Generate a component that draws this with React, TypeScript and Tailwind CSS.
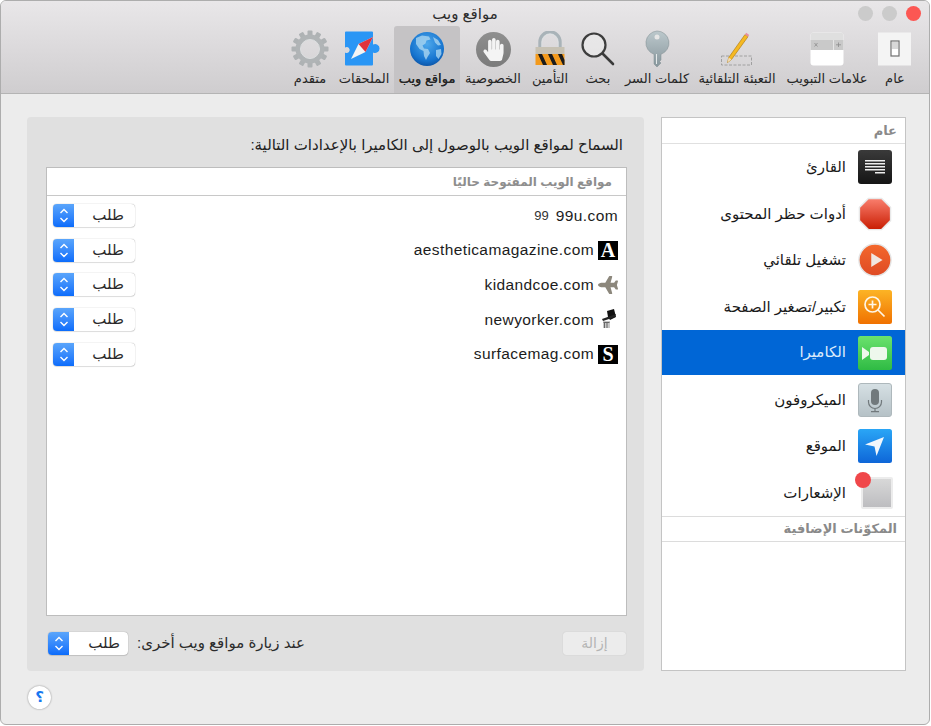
import { FaHandPaper, FaPlane } from "react-icons/fa";

function GeneralIcon() {
  return (
    <svg width="34" height="34" viewBox="0 0 34 34">
      <rect width="33" height="33" y="0.5" fill="#f4f4f4" />
      <rect x="13" y="9" width="8" height="15" fill="#fff" stroke="#6f6f6f" strokeWidth="1.2" />
      <rect x="14" y="10" width="6" height="7" fill="#d8d8d8" />
    </svg>
  );
}

function TabsIcon() {
  return (
    <svg width="34" height="34" viewBox="0 0 34 34">
      <rect x="0.5" y="0.5" width="33" height="33" rx="3" fill="#fff" />
      <path d="M0.5 8V3.5a3 3 0 0 1 3-3h27a3 3 0 0 1 3 3V8z" fill="#dfdfdf" />
      <rect x="0.5" y="8" width="33" height="10" fill="#c9c9c9" />
      <rect x="23" y="8" width="0.8" height="10" fill="#eee" />
      <path d="M4.5 11l3 3.5m0-3.5l-3 3.5M28.5 10.5v4.500M26 12.800h5" stroke="#8b8b8b" strokeWidth="0.8" fill="none" />
    </svg>
  );
}

function AutofillIcon() {
  return (
    <svg width="34" height="36" viewBox="0 0 34 36">
      <rect x="1.500" y="25" width="30" height="9" fill="none" stroke="#9a9a9a" strokeWidth="0.9" strokeDasharray="3 1.500" />
      <path d="M7.500 31.500l1.200-5L25 3.500l3 2.200L11.500 28.500z" fill="#f5b923" stroke="#a8740c" strokeWidth="0.6" />
      <path d="M25 3.500l1.200-1.800 3 2.200-1.200 1.800z" fill="#e88fa0" />
      <path d="M7.500 31.500l1.200-5 2.800 2z" fill="#f2dcb4" />
    </svg>
  );
}

function KeyIcon() {
  return (
    <svg width="26" height="38" viewBox="0 0 26 38">
      <defs>
        <linearGradient id="key" x1="0" y1="0" x2="0" y2="1">
          <stop offset="0" stopColor="#bcc8cc" />
          <stop offset="1" stopColor="#87969c" />
        </linearGradient>
      </defs>
      <path d="M13 1a12 12 0 0 1 4 23.300V30l-1.500 1.500L17 33l-4 4-3-3V24.300A12 12 0 0 1 13 1z" fill="url(#key)" stroke="#7f8c91" strokeWidth="0.5" />
      <circle cx="13" cy="7" r="2.500" fill="#e6e6e6" />
      <path d="M12.500 24v10" stroke="#e4e9ea" strokeWidth="1" />
    </svg>
  );
}

function SearchIcon() {
  return (
    <svg width="36" height="36" viewBox="0 0 36 36">
      <circle cx="14" cy="14" r="11.500" fill="#f2f2f2" fillOpacity="0.5" stroke="#3d3d3d" strokeWidth="2.200" />
      <path d="M23 23l10 10" stroke="#3a3a3a" strokeWidth="2.600" strokeLinecap="round" />
    </svg>
  );
}

function LockIcon() {
  return (
    <svg width="30" height="36" viewBox="0 0 30 36">
      <path d="M5 17V11a10 10 0 0 1 20 0v6" fill="none" stroke="#a9b3b8" strokeWidth="3.400" />
      <path d="M6.800 17V11a8.200 8.200 0 0 1 16.400 0v6" fill="none" stroke="#dfe4e6" strokeWidth="0.8" />
      <rect x="0.500" y="16" width="29" height="7" fill="#c7c2b4" />
      <rect x="0.500" y="23" width="29" height="11" fill="#f39a1c" />
      <path d="M3 23h4l5 11H8zM13 23h4l5 11h-4zM23 23h4l2.500 6v5H28z" fill="#1c1c1c" />
    </svg>
  );
}

function GlobeIcon() {
  return (
    <svg width="36" height="36" viewBox="0 0 36 36">
      <defs>
        <radialGradient id="globe" cx="0.5" cy="0.35" r="0.7">
          <stop offset="0" stopColor="#4fa9ec" />
          <stop offset="0.7" stopColor="#1674cf" />
          <stop offset="1" stopColor="#0b4e9e" />
        </radialGradient>
      </defs>
      <circle cx="18" cy="18" r="17" fill="url(#globe)" />
      <path d="M7 7l6-2.500 7 1 1.500 3-4 1-1 3-3 2 1.500 3 4 .5 2 4-2.500 4-1.500 3-2-4-.5-5-4-2-3.500-5z" fill="#a9d5f0" fillOpacity="0.8" />
      <path d="M24 6l5 3 3 5-3 .5-3-3zM27 19l5-1 .5 5-3 5-2.500-3z" fill="#a9d5f0" fillOpacity="0.8" />
    </svg>
  );
}

function ExtensionsIcon() {
  return (
    <svg width="40" height="36" viewBox="0 0 40 36">
      <path d="M1 1.500a1 1 0 0 1 1-1h26a1 1 0 0 1 1 1v12a4.500 4.500 0 1 1 0 8v12a1 1 0 0 1-1 1H2a1 1 0 0 1-1-1V21.500a3 3 0 1 0 0-5z" fill="#2a96f5" />
      <path d="M7 28L14.500 13 29 6 21.500 21z" fill="#f4f4f4" />
      <path d="M14.500 13L29 6 21.500 21z" fill="#e0333c" />
    </svg>
  );
}

function GearIcon() {
  const teeth = [0, 30, 60, 90, 120, 150, 180, 210, 240, 270, 300, 330];
  return (
    <svg width="38" height="38" viewBox="0 0 38 38">
      {teeth.map((a) => (
        <rect key={a} x="16.500" y="0.500" width="5" height="8" rx="1" fill="#aeb2b4" transform={`rotate(${a} 19 19)`} />
      ))}
      <circle cx="19" cy="19" r="12" fill="none" stroke="#b0b4b6" strokeWidth="5" />
      <circle cx="19" cy="19" r="9.500" fill="none" stroke="#dcdfe0" strokeWidth="1" />
    </svg>
  );
}

function ReaderIcon() {
  return (
    <svg width="34" height="34" viewBox="0 0 34 34">
      <defs>
        <linearGradient id="reader" x1="0" y1="0" x2="0" y2="1">
          <stop offset="0" stopColor="#3a3a3a" />
          <stop offset="1" stopColor="#151515" />
        </linearGradient>
      </defs>
      <rect width="34" height="34" rx="3" fill="url(#reader)" />
      <path d="M7 10h20v1.500H7zM7 13h20v1.500H7zM7 16h20v1.500H7zM7 19h20v1.500H7zM17 22h10v1.500H17z" fill="#eeeeee" />
    </svg>
  );
}

function StopIcon() {
  return (
    <svg width="36" height="36" viewBox="0 0 36 36">
      <defs>
        <linearGradient id="stop" x1="0" y1="0" x2="0" y2="1">
          <stop offset="0" stopColor="#fa7f6e" />
          <stop offset="1" stopColor="#c91d02" />
        </linearGradient>
      </defs>
      <path d="M11 1.500h14L34.500 11v14L25 34.500H11L1.500 25V11z" fill="url(#stop)" stroke="#e8e8e8" strokeWidth="1.500" />
    </svg>
  );
}

function PlayIcon() {
  return (
    <svg width="36" height="36" viewBox="0 0 36 36">
      <defs>
        <linearGradient id="play" x1="0" y1="0" x2="0" y2="1">
          <stop offset="0" stopColor="#f4682c" />
          <stop offset="1" stopColor="#de4a24" />
        </linearGradient>
      </defs>
      <circle cx="18" cy="18" r="17" fill="url(#play)" stroke="#e4e4e4" strokeWidth="1.500" />
      <path d="M14 10.500L26 18l-12 7.500z" fill="#f1e6e0" />
    </svg>
  );
}

function ZoomIcon() {
  return (
    <svg width="34" height="34" viewBox="0 0 34 34">
      <defs>
        <linearGradient id="zoom" x1="0" y1="0" x2="0" y2="1">
          <stop offset="0" stopColor="#fcb425" />
          <stop offset="1" stopColor="#f07100" />
        </linearGradient>
      </defs>
      <rect width="34" height="34" rx="2.500" fill="url(#zoom)" />
      <circle cx="14.500" cy="14.500" r="7.500" fill="none" stroke="#fff6e6" strokeWidth="1.700" />
      <path d="M14.500 10.500v8M10.500 14.500h8M20 20l6.500 6.500" stroke="#fff6e6" strokeWidth="1.700" />
    </svg>
  );
}

function CameraIcon() {
  return (
    <svg width="34" height="34" viewBox="0 0 34 34">
      <defs>
        <linearGradient id="cam" x1="0" y1="0" x2="0" y2="1">
          <stop offset="0" stopColor="#6be26d" />
          <stop offset="1" stopColor="#2fbb44" />
        </linearGradient>
      </defs>
      <rect width="34" height="34" rx="2.500" fill="url(#cam)" />
      <rect x="12" y="11" width="17" height="13" rx="3" fill="#eef8ec" />
      <path d="M4 11l7 5v3l-7 5z" fill="#eef8ec" />
    </svg>
  );
}

function MicIcon() {
  return (
    <svg width="34" height="34" viewBox="0 0 34 34">
      <defs>
        <linearGradient id="mic" x1="0" y1="0" x2="0" y2="1">
          <stop offset="0" stopColor="#d6e0e4" />
          <stop offset="1" stopColor="#b5c1c6" />
        </linearGradient>
      </defs>
      <rect x="0.500" y="0.500" width="33" height="33" rx="2.500" fill="url(#mic)" stroke="#aeb8bc" />
      <rect x="13" y="6" width="8" height="16" rx="4" fill="#71797c" />
      <path d="M10.500 17v2a6.500 6.500 0 0 0 13 0v-2M17 25.500v3M13 28.700h8" fill="none" stroke="#71797c" strokeWidth="1.200" />
    </svg>
  );
}

function LocationIcon() {
  return (
    <svg width="34" height="34" viewBox="0 0 34 34">
      <defs>
        <linearGradient id="loc" x1="0" y1="0" x2="0" y2="1">
          <stop offset="0" stopColor="#2aa6f6" />
          <stop offset="1" stopColor="#0e66d8" />
        </linearGradient>
      </defs>
      <rect width="34" height="34" rx="2.500" fill="url(#loc)" />
      <path d="M26 8L18.500 27l-2-9.500L7 15.500z" fill="#f2f7fc" />
    </svg>
  );
}

function NotificationIcon() {
  return (
    <div className="relative h-[34px] w-[34px]">
      <div className="h-[32px] w-[32px] translate-x-[1px] translate-y-[1px] rounded-[2px] border-2 border-[#ececec] bg-linear-to-b from-[#d8d8d8] to-[#bdbdc0]" />
      <div className="absolute top-[-4px] left-[-3px] h-[16px] w-[16px] rounded-full bg-[#f0474a]" />
    </div>
  );
}

const toolbarItems = [
  { label: "عام", width: "w-[46px]", icon: <GeneralIcon /> },
  { label: "علامات التبويب", width: "w-[90px]", icon: <TabsIcon /> },
  { label: "التعبئة التلقائية", width: "w-[90px]", icon: <AutofillIcon /> },
  { label: "كلمات السر", width: "w-[70px]", icon: <KeyIcon /> },
  { label: "بحث", width: "w-[48px]", icon: <SearchIcon /> },
  { label: "التأمين", width: "w-[48px]", icon: <LockIcon /> },
  {
    label: "الخصوصية",
    width: "w-[66px]",
    icon: (
      <div className="flex h-[35px] w-[35px] items-center justify-center rounded-full bg-linear-to-b from-[#8f8f8f] to-[#7b7b7b]">
        <FaHandPaper className="h-[23px] w-[23px] text-[#f4f4f4]" />
      </div>
    ),
  },
  { label: "مواقع ويب", width: "w-[66px]", icon: <GlobeIcon />, active: true },
  { label: "الملحقات", width: "w-[60px]", icon: <ExtensionsIcon /> },
  { label: "متقدم", width: "w-[48px]", icon: <GearIcon /> },
];

const sidebarItems = [
  { label: "القارئ", icon: <ReaderIcon /> },
  { label: "أدوات حظر المحتوى", icon: <StopIcon /> },
  { label: "تشغيل تلقائي", icon: <PlayIcon /> },
  { label: "تكبير/تصغير الصفحة", icon: <ZoomIcon /> },
  { label: "الكاميرا", icon: <CameraIcon />, active: true },
  { label: "الميكروفون", icon: <MicIcon /> },
  { label: "الموقع", icon: <LocationIcon /> },
  { label: "الإشعارات", icon: <NotificationIcon /> },
];

function SquareFavicon({ letter }: { letter: string }) {
  return (
    <div className="flex h-[19px] w-[20px] items-center justify-center bg-black font-['Liberation_Serif',serif] text-[20px] leading-none font-bold text-white">
      {letter}
    </div>
  );
}

function HatFavicon() {
  return (
    <svg width="20" height="20" viewBox="0 0 20 20">
      <path d="M9 2l7-2 2 8-6 3-2-3z" fill="#111" />
      <path d="M4 10l14-5-1 3-12 4z" fill="#222" />
      <path d="M5 12h7v7H5z" fill="#c8c8c8" />
      <path d="M6.500 14v5M9 14v5M5.500 13.500h6" stroke="#666" strokeWidth="1" />
    </svg>
  );
}

function Select({ width, pad }: { width: string; pad: string }) {
  return (
    <div className={`flex h-[23px] ${width} overflow-hidden rounded-[4px] bg-white shadow-[0_0_1px_rgba(0,0,0,0.45),0_1px_1px_rgba(0,0,0,0.1)]`}>
      <div className={`flex-1 ${pad} text-[15px] leading-[22px] text-[#2a2a2a]`}>طلب</div>
      <div className="flex w-[21px] items-center justify-center bg-linear-to-b from-[#5aa5fb] to-[#0a6cfb]">
        <svg width="10" height="17" viewBox="0 0 10 17" fill="none" stroke="#fff" strokeWidth="1.400">
          <path d="M1.500 6L5 2.500 8.500 6M1.500 11L5 14.500 8.500 11" />
        </svg>
      </div>
    </div>
  );
}

function SiteRow({ domain, icon, iconAfter }: { domain: string; icon: React.ReactNode; iconAfter?: boolean }) {
  return (
    <div className="flex h-[34.7px] items-center justify-between pr-[8px] pl-[6px]">
      <div className="flex items-center gap-[4px]">
        {!iconAfter && icon}
        <span dir="ltr" className="text-[15.5px] tracking-[0.4px] text-[#1c1c1c]">
          {domain}
        </span>
        {iconAfter && icon}
      </div>
      <Select width="w-[82px]" pad="pr-[11px]" />
    </div>
  );
}

export default function App() {
  return (
    <div
      dir="rtl"
      className="flex h-[725px] w-[930px] flex-col overflow-hidden rounded-[6px] border border-[#adadad] bg-[#ececec] font-['Liberation_Sans','DejaVu_Sans',sans-serif]"
    >
      <div className="h-[93px] shrink-0 border-b border-[#b4b4b4] bg-linear-to-b from-[#e9e7e9] to-[#cfcdcf]">
        <div className="relative flex h-[25px] items-center justify-center pt-[2px] text-[15px] text-[#2c2c2c]">
          مواقع ويب
          <div className="absolute top-[5px] right-[8px] flex gap-[9px]">
            <div className="h-[15px] w-[15px] rounded-full bg-[#fc5753]" />
            <div className="h-[15px] w-[15px] rounded-full bg-[#cbcbcb]" />
            <div className="h-[15px] w-[15px] rounded-full bg-[#cbcbcb]" />
          </div>
        </div>
        <div className="flex h-[67px] pr-[11px]">
          {toolbarItems.map((item) => (
            <div
              key={item.label}
              className={`flex ${item.width} flex-col items-center rounded-t-[3px] ${item.active ? "bg-[#c5c3c5] [text-shadow:0_0_0.6px_#262626]" : ""}`}
            >
              <div className="mt-[4px] flex h-[38px] items-center justify-center">{item.icon}</div>
              <div className="mt-[2px] text-[13px] leading-[18px] whitespace-nowrap text-[#262626]">{item.label}</div>
            </div>
          ))}
        </div>
      </div>

      <div className="flex gap-[17px] pt-[23px] pr-[23px] pl-[26px]">
        <div className="flex h-[554px] w-[245px] flex-col border border-[#c4c4c4] bg-white">
          <div className="flex h-[26px] shrink-0 items-center border-b border-[#e0e0e0] pr-[8px] text-[13px] font-bold text-[#8a8a8a]">
            عام
          </div>
          {sidebarItems.map((item) => (
            <div
              key={item.label}
              className={`flex shrink-0 items-center gap-[12px] pr-[13px] ${item.active ? "mb-[1.5px] h-[45px] bg-[#0066d6] text-[#dcebfb]" : "h-[46.5px] text-[#1a1a1a]"}`}
            >
              <div className="flex w-[34px] justify-center">{item.icon}</div>
              <span className="text-[15px] whitespace-nowrap">{item.label}</span>
            </div>
          ))}
          <div className="flex h-[26px] shrink-0 items-center border-y border-[#dcdcdc] pr-[8px] text-[13px] font-bold text-[#8a8a8a]">
            المكوّنات الإضافية
          </div>
        </div>

        <div className="flex h-[554px] w-[617px] flex-col rounded-[4px] bg-[#e0e0e0]">
          <div className="flex h-[50px] items-center pt-[6px] pr-[21px] text-[15px] text-[#222222]">
            السماح لمواقع الويب بالوصول إلى الكاميرا بالإعدادات التالية:
          </div>
          <div className="mr-[17px] ml-[19px] h-[449px] border border-[#bdbdbd] bg-white">
            <div className="flex h-[28px] items-center border-b border-[#c8c8c8] pr-[14px] text-[12px] font-bold text-[#8e8e8e]">
              مواقع الويب المفتوحة حاليًا
            </div>
            <div className="pt-[2px]">
              <SiteRow
                domain="99u.com"
                iconAfter
                icon={<span className="mr-[3px] text-[13px] text-[#333333]">99</span>}
              />
              <SiteRow domain="aestheticamagazine.com" icon={<SquareFavicon letter="A" />} />
              <SiteRow domain="kidandcoe.com" icon={<FaPlane className="h-[20px] w-[20px] -scale-x-100 text-[#8c877c]" />} />
              <SiteRow domain="newyorker.com" icon={<HatFavicon />} />
              <SiteRow domain="surfacemag.com" icon={<SquareFavicon letter="S" />} />
            </div>
          </div>
          <div className="flex items-start justify-between pt-[16px] pr-[18px] pl-[21px]">
            <div className="flex h-[23px] w-[63px] items-center justify-center rounded-[3px] bg-[#ececec] text-[14px] text-[#b4b4b4] shadow-[0_0_1px_rgba(0,0,0,0.2)]">
              إزالة
            </div>
            <div className="flex items-center gap-[9px]">
              <span className="text-[15px] text-[#2c2c2c]">عند زيارة مواقع ويب أخرى:</span>
              <Select width="w-[80px]" pad="pr-[8px]" />
            </div>
          </div>
        </div>
      </div>

      <div className="flex justify-end pt-[15px] pl-[27px]">
        <div className="flex h-[23px] w-[23px] items-center justify-center rounded-full bg-white text-[15px] font-bold text-[#1777f0] shadow-[0_0_2px_rgba(0,0,0,0.45)]">
          ؟
        </div>
      </div>
    </div>
  );
}
